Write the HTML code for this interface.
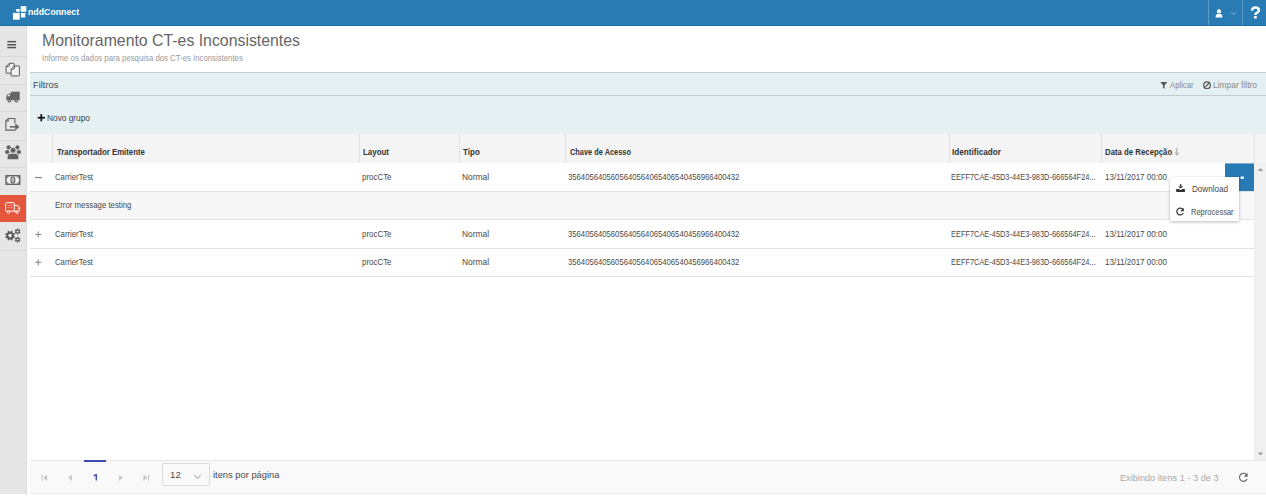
<!DOCTYPE html>
<html><head><meta charset="utf-8">
<style>
*{margin:0;padding:0;box-sizing:border-box}
html,body{width:1266px;height:503px;overflow:hidden;background:#fff;font-family:"Liberation Sans",sans-serif;color:#555}
.a{position:absolute}
.t{position:absolute;white-space:nowrap;line-height:1;transform-origin:0 0}
.sep{position:absolute;left:0;width:26px;height:1px;background:#d9d9d9}
.hl{position:absolute;top:134px;width:1px;height:29px;background:#e2e2e2}
.rl{position:absolute;left:30px;width:1224px;height:1px;background:#e3e3e3}
svg{position:absolute;overflow:visible}
</style></head><body>
<!-- header -->
<div class="a" style="left:0;top:0;width:1266px;height:26px;background:#287cb3;border-bottom:1px solid #226fa6"></div>

<div class="a" style="left:1208px;top:0;width:1px;height:25px;background:#5a9cc9"></div>
<div class="a" style="left:1242px;top:0;width:1px;height:25px;background:#5a9cc9"></div>
<svg style="left:1215px;top:9px" width="8" height="9" viewBox="0 0 8 9">
<circle cx="4" cy="2.4" r="2.1" fill="#fff"/>
<path d="M0.6 8.4 C0.6 5.6 1.6 4.8 4 4.8 C6.4 4.8 7.4 5.6 7.4 8.4 Z" fill="#fff"/>
</svg>
<svg style="left:1230px;top:11px" width="7" height="5" viewBox="0 0 7 5">
<path d="M1 1.2 L3.4 3.6 L5.8 1.2" fill="none" stroke="#8fbfe0" stroke-width="0.9"/>
</svg>
<svg style="left:0;top:0" width="1266" height="30" viewBox="0 0 1266 30"><path d="M1252.05 10.6 Q1251.9 7.6 1255.3 7.6 Q1258.9 7.6 1258.9 10.2 Q1258.9 11.8 1257.1 12.7 Q1255.4 13.5 1255.4 15" fill="none" stroke="#fff" stroke-width="2.5"/><rect x="1254" y="16.1" width="2.8" height="2.4" fill="#fff"/></svg>

<!-- sidebar -->
<div class="a" style="left:0;top:26px;width:27px;height:468px;background:#e6e6e6;border-right:1px solid #dbdbdb"></div>
<div class="sep" style="top:56px"></div>
<div class="sep" style="top:84px"></div>
<div class="sep" style="top:111px"></div>
<div class="sep" style="top:140px"></div>
<div class="sep" style="top:167px"></div>
<div class="a" style="left:0;top:195px;width:26px;height:27px;background:#e4573d"></div>
<div class="sep" style="top:250px"></div>

<!-- filter panel -->
<div class="a" style="left:30px;top:72px;width:1236px;height:62px;background:#e5f0f2;border-top:1.5px solid #c5cacc"></div>
<div class="a" style="left:30px;top:95px;width:1236px;height:1px;background:#c5cacc"></div>

<!-- table header -->
<div class="a" style="left:30px;top:134px;width:1236px;height:29px;background:#f4f4f4"></div>
<div class="hl" style="left:52px"></div>
<div class="hl" style="left:359px"></div>
<div class="hl" style="left:459px"></div>
<div class="hl" style="left:565px"></div>
<div class="hl" style="left:949px"></div>
<div class="hl" style="left:1101px"></div>
<div class="hl" style="left:1254px"></div>

<!-- rows -->
<div class="a" style="left:30px;top:191px;width:1224px;height:28px;background:#f7f7f7"></div>
<div class="rl" style="top:191px"></div>
<div class="rl" style="top:219px"></div>
<div class="rl" style="top:248px"></div>
<div class="rl" style="top:276px"></div>

<!-- scrollbar -->
<div class="a" style="left:1254px;top:163px;width:12px;height:297px;background:#f0f0f0"></div>

<!-- footer -->
<div class="a" style="left:30px;top:460px;width:1236px;height:34px;background:#f9f9f9;border-top:1px solid #e6e6e6;border-bottom:1px solid #ebebeb"></div>
<div class="a" style="left:84px;top:460px;width:22px;height:2px;background:#3a4db0"></div>
<div class="a" style="left:162px;top:463px;width:48px;height:23px;border:1px solid #dcdcdc;border-radius:2px;background:#f9f9f9"></div>

<svg style="left:0;top:0" width="1266" height="503" viewBox="0 0 1266 503">
<!-- logo -->
<g fill="#fff"><rect x="13" y="12.9" width="6.7" height="6.8"/><rect x="16.2" y="9" width="3.5" height="2.7"/><rect x="20.7" y="6.2" width="5.6" height="5.5"/><rect x="20.9" y="12.9" width="4.4" height="4.6"/></g>
<!-- novo grupo plus -->
<g fill="#111"><rect x="37.7" y="116.85" width="7.2" height="1.75"/><rect x="40.4" y="114.1" width="1.75" height="7.2"/></g>
<!-- hamburger -->
<g fill="#555"><rect x="7.3" y="40.9" width="8.8" height="1.5"/><rect x="7.3" y="44" width="8.8" height="1.5"/><rect x="7.3" y="46.8" width="8.8" height="1.5"/></g>
<!-- copy -->
<g fill="#f3f3f3" stroke="#5a5a5a" stroke-width="1" stroke-linejoin="round">
<path d="M9.4 63.3 H13.6 Q14.1 63.3 14.1 63.8 V73.2 H6.1 V66.6 Z"/>
<path d="M9.4 63.3 V65.6 Q9.4 66.6 8.4 66.6 H6.1" fill="none"/>
<path d="M14.4 65.9 H18.9 Q19.4 65.9 19.4 66.4 V75.4 Q19.4 75.9 18.9 75.9 H11.6 Q11.1 75.9 11.1 75.4 V69.2 Z"/>
<path d="M14.4 65.9 V68.2 Q14.4 69.2 13.4 69.2 H11.1" fill="none"/>
</g>
<!-- truck solid -->
<g fill="#666">
<rect x="10.8" y="91.7" width="8.9" height="8.4"/>
<path d="M6.3 100.1 V96.2 Q6.3 95.2 7.2 94.5 L8 93.9 Q8.4 93.6 9 93.6 H11 V100.1 Z"/>
<circle cx="9.4" cy="100.6" r="1.9"/><circle cx="16.3" cy="100.6" r="1.9"/>
</g>
<path d="M7.4 96.3 Q7.4 95.2 8.4 94.6 H9.9 V96.3 Z" fill="#e6e6e6"/>
<circle cx="9.4" cy="100.6" r="0.7" fill="#e6e6e6"/><circle cx="16.3" cy="100.6" r="0.7" fill="#e6e6e6"/>
<!-- export -->
<g fill="none" stroke="#626262" stroke-width="1.1">
<path d="M14.85 122.9 V118.55 H8.4 L5.85 121.1 V130.15 H14.85 V129.5"/>
<path d="M8.4 118.55 V121.1 H5.85" stroke-width="0.9"/>
</g>
<g fill="#626262"><rect x="9.9" y="126.1" width="5.8" height="1.5"/><path d="M15.2 123.3 L19.4 126.85 L15.2 130.4 Z"/></g>
<!-- users -->
<g fill="#626262">
<circle cx="8.7" cy="147.4" r="2.1"/><circle cx="17.4" cy="147.4" r="2.1"/>
<ellipse cx="7.2" cy="152" rx="2.2" ry="2.1"/><ellipse cx="18.9" cy="152" rx="2.2" ry="2.1"/>
<circle cx="13" cy="150.3" r="3" stroke="#e6e6e6" stroke-width="0.8"/>
<path d="M7.3 159.6 V156.8 Q7.3 153.4 10.6 153.4 H15.4 Q18.7 153.4 18.7 156.8 V159.6 Z" stroke="#e6e6e6" stroke-width="0.6"/>
</g>
<!-- money -->
<rect x="5.95" y="175.75" width="13.8" height="8.5" fill="#f4f4f4" stroke="#5a5a5a" stroke-width="1.3"/>
<path d="M6.6 176.4 H9.2 Q7.6 177.6 6.6 178.8 Z M19.1 176.4 H16.5 Q18.1 177.6 19.1 178.8 Z M6.6 183.6 H9.2 Q7.6 182.4 6.6 181.2 Z M19.1 183.6 H16.5 Q18.1 182.4 19.1 181.2 Z" fill="#6a6a6a"/>
<ellipse cx="12.85" cy="180" rx="2.0" ry="3.0" fill="none" stroke="#5a5a5a" stroke-width="1.1"/>
<rect x="12.45" y="178.3" width="0.9" height="3.4" fill="#5a5a5a"/>
<!-- truck outline white -->
<g fill="none" stroke="#fff" stroke-width="0.95" stroke-linejoin="round">
<path d="M14.3 211.2 H6.5 Q5.6 211.2 5.6 210.3 V203.5 Q5.6 202.6 6.5 202.6 H13.4 Q14.3 202.6 14.3 203.5 Z"/>
<path d="M14.3 205.4 H17.2 Q18.2 205.4 19.6 207.6 V210.3 Q19.6 211.2 18.7 211.2 H14.3"/>
<circle cx="8.5" cy="212.2" r="1.2" fill="#e4573d"/><circle cx="17" cy="212.2" r="1.2" fill="#e4573d"/>
<path d="M7.2 205.2 H12.6 M7.2 207.6 H12.6" stroke-width="0.6" stroke-opacity="0.55"/>
</g>
<circle cx="18.2" cy="208.2" r="0.7" fill="#fff"/>
<!-- gears -->
<g fill="#585858">
<path d="M13.87 236.08 L14.94 236.84 L14.40 238.15 L13.10 237.93 L12.43 238.60 L12.65 239.90 L11.34 240.44 L10.58 239.37 L9.62 239.37 L8.86 240.44 L7.55 239.90 L7.77 238.60 L7.10 237.93 L5.80 238.15 L5.26 236.84 L6.33 236.08 L6.33 235.12 L5.26 234.36 L5.80 233.05 L7.10 233.27 L7.77 232.60 L7.55 231.30 L8.86 230.76 L9.62 231.83 L10.58 231.83 L11.34 230.76 L12.65 231.30 L12.43 232.60 L13.10 233.27 L14.40 233.05 L14.94 234.36 L13.87 235.12 Z"/>
<path d="M19.77 231.87 L20.43 232.49 L19.87 233.46 L19.00 233.20 L18.37 233.56 L18.16 234.45 L17.04 234.45 L16.83 233.56 L16.20 233.20 L15.33 233.46 L14.77 232.49 L15.43 231.87 L15.43 231.13 L14.77 230.51 L15.33 229.54 L16.20 229.80 L16.83 229.44 L17.04 228.55 L18.16 228.55 L18.37 229.44 L19.00 229.80 L19.87 229.54 L20.43 230.51 L19.77 231.13 Z"/>
<path d="M19.77 239.97 L20.43 240.59 L19.87 241.56 L19.00 241.30 L18.37 241.66 L18.16 242.55 L17.04 242.55 L16.83 241.66 L16.20 241.30 L15.33 241.56 L14.77 240.59 L15.43 239.97 L15.43 239.23 L14.77 238.61 L15.33 237.64 L16.20 237.90 L16.83 237.54 L17.04 236.65 L18.16 236.65 L18.37 237.54 L19.00 237.90 L19.87 237.64 L20.43 238.61 L19.77 239.23 Z"/>
</g>
<g fill="#f4f4f4"><circle cx="10.1" cy="235.6" r="1.8"/><circle cx="17.6" cy="231.5" r="0.95"/><circle cx="17.6" cy="239.6" r="0.95"/></g>
<!-- funnel -->
<path d="M1160.3 81.9 H1167.3 L1164.6 85.3 V88.9 L1163 87.6 V85.3 Z" fill="#555"/>
<!-- ban -->
<circle cx="1207" cy="85.15" r="3.35" fill="none" stroke="#555" stroke-width="1.2"/>
<path d="M1209.4 82.75 L1204.6 87.55" stroke="#555" stroke-width="1.2"/>
<!-- expand -->
<rect x="35" y="176.9" width="6.9" height="1.3" fill="#8a8a8a"/>
<g fill="#8a8a8a">
<rect x="35.2" y="233.85" width="6.2" height="1.1"/><rect x="37.75" y="231.4" width="1.1" height="6"/>
<rect x="35.2" y="261.75" width="6.2" height="1.1"/><rect x="37.75" y="259.3" width="1.1" height="6"/>
</g>
<!-- sort arrow -->
<g fill="#999"><rect x="1176.4" y="148" width="0.9" height="6.5"/><path d="M1174.8 152.6 L1176.85 155.8 L1178.9 152.6 L1178.3 152.3 L1176.85 154.4 L1175.4 152.3 Z"/></g>
<!-- blue button -->
<rect x="1225" y="163.4" width="29" height="27.6" fill="#287ab4"/>
<rect x="1240.6" y="176.5" width="3.2" height="2.4" fill="#fff"/>
<!-- scroll arrows -->
<path d="M1257.9 171 L1260.45 168 L1263 171 Z" fill="#999"/>
<path d="M1257.9 452.5 L1260.45 455.5 L1263 452.5 Z" fill="#999"/>
<!-- pager -->
<g fill="#c4c4c4">
<rect x="41.6" y="474.8" width="1" height="6"/><path d="M47.1 474.8 V480.8 L43.3 477.8 Z"/>
<path d="M71.8 474.8 V480.8 L68 477.8 Z"/>
<path d="M119 474.8 V480.8 L122.8 477.8 Z"/>
<path d="M143.5 474.8 V480.8 L147.3 477.8 Z"/><rect x="148" y="474.8" width="1" height="6"/>
</g>
<path d="M194.3 475 L197.6 478.5 L200.9 475" fill="none" stroke="#bbb" stroke-width="1.1"/>
<!-- page 1 -->
<path d="M93.5 475.4 L95.6 473.9 H96.9 V480.5 H95.6 V475.6 L94 476.6 Z" fill="#2f3fa3"/>
</svg>
<div class="a" style="left:1170.4px;top:176.5px;width:68.8px;height:44.8px;background:#fff;box-shadow:0 1px 3px rgba(0,0,0,0.28)"></div>

<div class="t" style="left:42.22px;top:32.15px;font-size:16.21px;color:#666;transform:scaleX(0.9786);">Monitoramento CT-es Inconsistentes</div>
<div class="t" style="left:42.35px;top:53.97px;font-size:9.18px;color:#999;transform:scaleX(0.8489);">Informe os dados para pesquisa dos CT-es Inconsistentes</div>
<div class="t" style="left:32.56px;top:80.26px;font-size:9.90px;color:#444;transform:scaleX(0.9423);">Filtros</div>
<div class="t" style="left:47.00px;top:114.29px;font-size:8.32px;color:#444;">Novo grupo</div>
<div class="t" style="left:1170.20px;top:81.05px;font-size:8.61px;color:#888;transform:scaleX(0.8962);">Aplicar</div>
<div class="t" style="left:1212.72px;top:81.05px;font-size:8.61px;color:#888;transform:scaleX(0.9814);">Limpar filtro</div>
<div class="t" style="left:56.70px;top:147.59px;font-size:9.04px;font-weight:bold;color:#333;transform:scaleX(0.8627);">Transportador Emitente</div>
<div class="t" style="left:362.71px;top:147.71px;font-size:8.90px;font-weight:bold;color:#333;transform:scaleX(0.8929);">Layout</div>
<div class="t" style="left:463.20px;top:147.71px;font-size:8.90px;font-weight:bold;color:#333;transform:scaleX(0.9056);">Tipo</div>
<div class="t" style="left:569.90px;top:147.71px;font-size:8.90px;font-weight:bold;color:#333;transform:scaleX(0.8329);">Chave de Acesso</div>
<div class="t" style="left:951.98px;top:147.71px;font-size:8.90px;font-weight:bold;color:#333;transform:scaleX(0.9192);">Identificador</div>
<div class="t" style="left:1105.12px;top:147.71px;font-size:8.90px;font-weight:bold;color:#333;transform:scaleX(0.8787);">Data de Recepção</div>
<div class="t" style="left:54.83px;top:172.61px;font-size:8.90px;color:#4a4a4a;transform:scaleX(0.8738);">CarrierTest</div>
<div class="t" style="left:362.21px;top:172.61px;font-size:8.90px;color:#4a4a4a;transform:scaleX(0.8935);">procCTe</div>
<div class="t" style="left:461.65px;top:172.61px;font-size:8.90px;color:#4a4a4a;transform:scaleX(0.9481);">Normal</div>
<div class="t" style="left:568.33px;top:172.61px;font-size:8.90px;color:#4a4a4a;transform:scaleX(0.8679);">3564056405605640564065406540456966400432</div>
<div class="t" style="left:951.47px;top:172.61px;font-size:8.90px;color:#4a4a4a;transform:scaleX(0.8349);">EEFF7CAE-45D3-44E3-983D-666564F24...</div>
<div class="t" style="left:1105.00px;top:172.61px;font-size:8.90px;color:#4a4a4a;transform:scaleX(0.9045);">13/11/2017 00:00</div>
<div class="t" style="left:54.79px;top:201.35px;font-size:8.61px;color:#4a4a4a;transform:scaleX(0.9096);">Error message testing</div>
<div class="t" style="left:213.47px;top:470.53px;font-size:8.75px;color:#4a4a4a;transform:scaleX(1.0667);">itens por página</div>
<div class="t" style="left:169.98px;top:469.93px;font-size:9.47px;color:#4a4a4a;transform:scaleX(1.0222);">12</div>
<div class="t" style="left:1120.34px;top:472.61px;font-size:9.61px;color:#aaa;transform:scaleX(0.9569);">Exibindo itens 1 - 3 de 3</div>
<div class="t" style="left:1191.90px;top:185.19px;font-size:9.04px;color:#4a4a4a;transform:scaleX(0.8974);">Download</div>
<div class="t" style="left:1191.11px;top:207.67px;font-size:8.46px;color:#4a4a4a;transform:scaleX(0.8894);">Reprocessar</div>
<div class="t" style="left:28.48px;top:7.75px;font-size:8.61px;font-weight:bold;color:#fff;transform:scaleX(1.0204);">nddConnect</div>
<div class="t" style="left:54.83px;top:230.01px;font-size:8.90px;color:#4a4a4a;transform:scaleX(0.8738);">CarrierTest</div>
<div class="t" style="left:362.21px;top:230.01px;font-size:8.90px;color:#4a4a4a;transform:scaleX(0.8935);">procCTe</div>
<div class="t" style="left:461.65px;top:230.01px;font-size:8.90px;color:#4a4a4a;transform:scaleX(0.9481);">Normal</div>
<div class="t" style="left:568.33px;top:230.01px;font-size:8.90px;color:#4a4a4a;transform:scaleX(0.8679);">3564056405605640564065406540456966400432</div>
<div class="t" style="left:951.47px;top:230.01px;font-size:8.90px;color:#4a4a4a;transform:scaleX(0.8349);">EEFF7CAE-45D3-44E3-983D-666564F24...</div>
<div class="t" style="left:1105.00px;top:230.01px;font-size:8.90px;color:#4a4a4a;transform:scaleX(0.9045);">13/11/2017 00:00</div>
<div class="t" style="left:54.83px;top:258.11px;font-size:8.90px;color:#4a4a4a;transform:scaleX(0.8738);">CarrierTest</div>
<div class="t" style="left:362.21px;top:258.11px;font-size:8.90px;color:#4a4a4a;transform:scaleX(0.8935);">procCTe</div>
<div class="t" style="left:461.65px;top:258.11px;font-size:8.90px;color:#4a4a4a;transform:scaleX(0.9481);">Normal</div>
<div class="t" style="left:568.33px;top:258.11px;font-size:8.90px;color:#4a4a4a;transform:scaleX(0.8679);">3564056405605640564065406540456966400432</div>
<div class="t" style="left:951.47px;top:258.11px;font-size:8.90px;color:#4a4a4a;transform:scaleX(0.8349);">EEFF7CAE-45D3-44E3-983D-666564F24...</div>
<div class="t" style="left:1105.00px;top:258.11px;font-size:8.90px;color:#4a4a4a;transform:scaleX(0.9045);">13/11/2017 00:00</div>
<svg style="left:0;top:0" width="1266" height="503" viewBox="0 0 1266 503">
<g fill="#333">
<rect x="1179.9" y="184.2" width="1.5" height="2.5"/><path d="M1178 186.4 H1183.3 L1180.65 188.6 Z"/>
<path d="M1176.2 188.9 H1179 L1180.65 190.3 L1182.3 188.9 H1184.9 V192 H1176.2 Z"/>
</g>
<path d="M1182.60 209.10 A3.4 3.4 0 1 0 1183.28 212.94" fill="none" stroke="#333" stroke-width="1.2"/><path d="M1183.79 207.69 V211.29 H1180.19 Z" fill="#333"/>
<path d="M1246.33 474.47 A4.0 4.0 0 1 0 1247.13 478.99" fill="none" stroke="#666" stroke-width="1.15"/><path d="M1247.64 472.82 V476.72 H1243.74 Z" fill="#666"/>
</svg>

</body></html>
